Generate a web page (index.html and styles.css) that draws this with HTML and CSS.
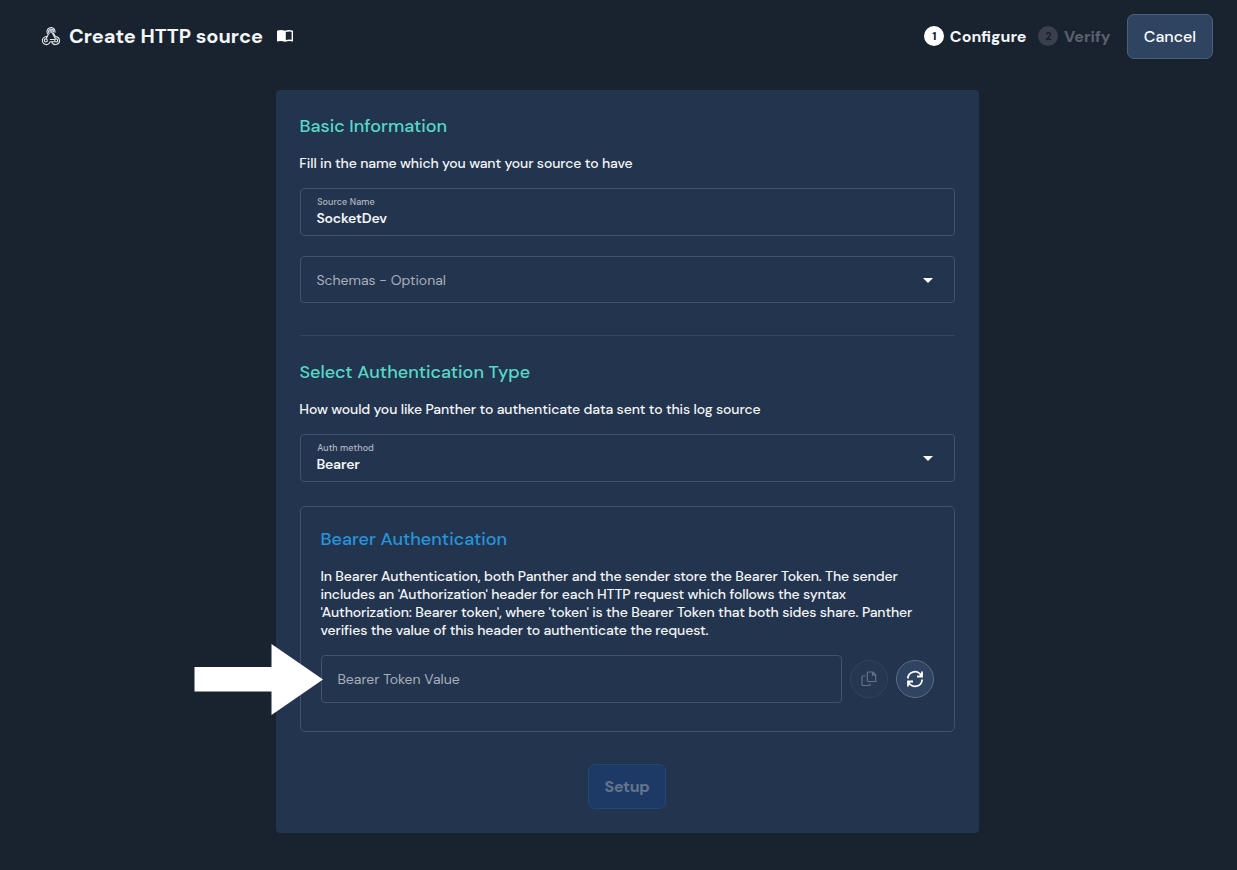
FILE: index.html
```html
<!DOCTYPE html>
<html lang="en">
<head>
<meta charset="utf-8">
<title>Create HTTP source</title>
<link rel="stylesheet" href="styles.css">
</head>
<body>
<header class="topbar">
  <svg class="hook-icon" viewBox="0 0 20 20" width="20" height="20" fill="none" stroke="#dfe3e8" stroke-width="1.100" stroke-linecap="round" stroke-linejoin="round">
    <path d="M12.300 7.100l2.100 3.500a4 4 0 1 1-3.400 6M13.900 6.300A4 4 0 1 0 7.300 8.500L5.400 12.300M9.200 15.700A4 4 0 1 1 4.300 10.700L5.600 10.400M10.800 5.900l3.500 6.500M9.200 13.500h4.200M9.200 15.700h4.200M12.500 5.700a2.500 2.500 0 1 0-4.200 1.600"/>
    <circle cx="4.800" cy="14.400" r="1.500"/><circle cx="15.200" cy="14.400" r="1.500"/><circle cx="10" cy="5.100" r="1.100"/>
  </svg>
  <h1 class="title">Create HTTP source</h1>
  <svg class="book-icon" viewBox="0 0 16 12" width="16" height="12"><path fill="#fff" fill-rule="evenodd" d="M0 .8Q4-.6 8 .8q4-1.400 8 0V11.500q-4-1.200-8 .3Q4 10.300 0 11.500ZM8.800 1.900V10q2.800-.9 5.800-.3V1.700q-2.900-.6-5.800.2Z"/></svg>
  <ol class="steps">
    <li class="step"><b class="num">1</b>Configure</li>
    <li class="step step-off"><b class="num">2</b>Verify</li>
  </ol>
  <button class="btn cancel">Cancel</button>
</header>
<main class="card">
  <section class="block">
    <h2 class="heading">Basic Information</h2>
    <p class="lead">Fill in the name which you want your source to have</p>
    <div class="field"><label class="label">Source Name</label><div class="value">SocketDev</div></div>
    <div class="field select empty"><span class="hint">Schemas - Optional</span><i class="caret"></i></div>
  </section>
  <section class="block auth">
    <h2 class="heading">Select Authentication Type</h2>
    <p class="lead">How would you like Panther to authenticate data sent to this log source</p>
    <div class="field select method"><div><label class="label">Auth method</label><div class="value">Bearer</div></div><i class="caret"></i></div>
    <div class="panel">
      <svg class="pointer" viewBox="0 0 130 72" width="130" height="72"><path fill="#fff" d="M.5 23H77.500V0L129 35.500 77.500 71V47.500H.5Z"/></svg>
      <h3 class="heading h-bearer">Bearer Authentication</h3>
      <p class="about">
        In Bearer Authentication, both Panther and the sender store the Bearer Token. The sender<br>
        includes an 'Authorization' header for each HTTP request which follows the syntax<br>
        'Authorization: Bearer token', where 'token' is the Bearer Token that both sides share. Panther<br>
        verifies the value of this header to authenticate the request.
      </p>
      <div class="token-row">
        <div class="field token"><span class="hint">Bearer Token Value</span></div>
        <button class="round off" aria-label="Copy"><svg viewBox="0 0 16 16" width="16" height="16" fill="none" stroke="currentColor" stroke-width="1.200" stroke-linejoin="round"><path d="M7.300 1h4.500l2.900 2.900v6.600H7.300a1 1 0 0 1-1-1V2a1 1 0 0 1 1-1ZM11.500 1v3.200h3.200M4.200 5H2a1 1 0 0 0-1 1v7.500a1 1 0 0 0 1 1h6a1 1 0 0 0 1-1v-.9"/></svg></button>
        <button class="round" aria-label="Refresh"><svg viewBox="0 0 18 18" width="18" height="18" fill="none" stroke="currentColor" stroke-width="1.800"><path d="M1.900 8.500A7 6.900 0 0 1 15.400 6M16 1.500v5h-5M16.100 9.500A7 6.900 0 0 1 2.600 12M2 16.500v-5h5"/></svg></button>
      </div>
    </div>
  </section>
  <button class="btn setup">Setup</button>
</main>
</body>
</html>
```
FILE: styles.css
```css
* { box-sizing: border-box; }
body { margin: 0; height: 870px; background: #19222f; color: #f4f6f8; font-family: "DM Sans", Inter, "Liberation Sans", sans-serif; display: flex; flex-direction: column; align-items: center; overflow: hidden; }
h1, h2, h3, p, ol { margin: 0; padding: 0; }
button { font-family: inherit; padding: 0; }
.topbar { width: 1237px; height: 90px; padding: 14px 24px 31px 41px; display: flex; align-items: center; }
.hook-icon, .book-icon { margin-bottom: 1px; }
.title { font-size: 20px; line-height: 28px; font-weight: 700; margin: 0 0 2px 8px; width: 208px; white-space: nowrap; }
.steps { display: flex; list-style: none; gap: 12px; margin-left: auto; }
.step { display: flex; align-items: center; gap: 5.500px; font-size: 16px; font-weight: 700; line-height: 24px; }
.step-off { color: #5b626d; }
.num { width: 20px; height: 20px; border-radius: 50%; background: #fff; color: #19222f; font-size: 11px; line-height: 20px; text-align: center; margin-bottom: 2px; }
.step-off .num { background: #3a404b; }
.btn { height: 45px; border-radius: 7px; border: 1px solid #4c607c; background: #2e4461; color: #fff; font-size: 16px; }
.cancel { width: 86px; margin-left: 16.500px; font-weight: 500; }
.card { width: 703px; height: 743px; margin-left: 18px; background: #23344e; border-radius: 4px; padding: 24px 24px; display: flex; flex-direction: column; }
.block { display: flex; flex-direction: column; }
.heading { font-size: 18px; line-height: 24px; font-weight: 500; color: #57d9c7; white-space: nowrap; margin-left: -0.6px; }
.lead { font-size: 14px; line-height: 20px; font-weight: 500; letter-spacing: -0.11px; margin: 15px 0 15px -0.7px; white-space: nowrap; }
.field { height: 48px; border: 1px solid #43526a; border-radius: 4px; padding: 0 16px 0 15.4px; }
.select { display: flex; justify-content: space-between; align-items: center; }
.empty { height: 47px; margin-top: 20px; }
.label { display: block; font-size: 9px; line-height: 10px; font-weight: 500; letter-spacing: 0.08px; color: #b3b9c3; padding: 8px 0 0 0.8px; }
.value { font-size: 14px; line-height: 22px; font-weight: 600; letter-spacing: -0.18px; }
.hint { font-size: 14px; color: #a8afba; }
.caret { border: 5px solid transparent; border-top: 5px solid #fff; border-bottom: 0; margin-right: 5px; }
.empty .caret { margin-top: 2px; }
.auth { border-top: 1px solid #35455d; margin-top: 32px; padding-top: 24px; }
.method { align-items: flex-start; }
.method .caret { margin-top: 21px; }
.panel { position: relative; height: 226px; margin-top: 24px; border: 1px solid #43526a; border-radius: 5px; padding: 20px; }
.pointer { position: absolute; left: -107px; top: 137px; }
.h-bearer { color: #2795dc; }
.about { font-size: 14px; line-height: 18px; font-weight: 500; letter-spacing: -0.125px; margin: 16px 0 16px -0.6px; white-space: nowrap; }
.token-row { display: flex; align-items: center; gap: 8px; }
.token { flex: 1; display: flex; align-items: center; }
.round { width: 38px; height: 38px; border-radius: 50%; border: 1px solid #5b6d84; background: #2e4461; color: #fff; display: flex; align-items: center; justify-content: center; }
.off { border-color: #33435b; background: #263751; color: #63718a; }
.setup { width: 78px; margin: 32px 0 0 288px; background: #1c3a65; border-color: #1d4a72; color: #65758c; font-weight: 700; letter-spacing: -0.3px; }
```
